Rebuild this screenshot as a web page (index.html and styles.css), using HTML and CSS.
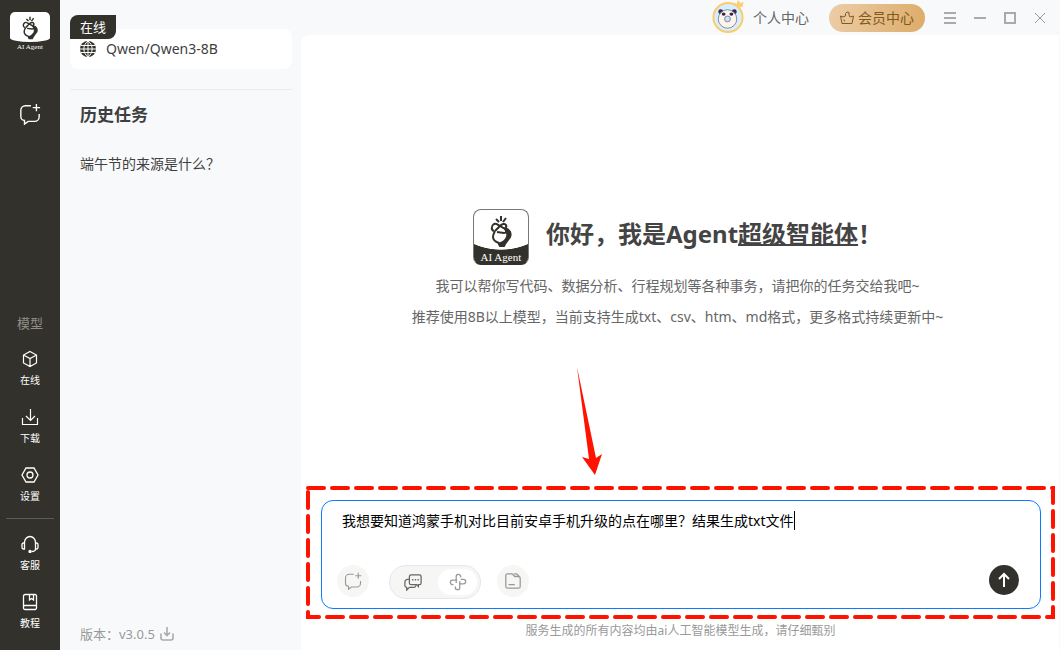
FILE: index.html
```html
<!DOCTYPE html>
<html lang="zh-CN">
<head>
    <meta charset="UTF-8">
    <meta name="viewport" content="width=device-width, initial-scale=1.0">
    <title>AI Agent</title>
    <link rel="stylesheet" href="styles.css">
</head>
<body>
    <!-- shared icons -->
    <svg class="sprite" aria-hidden="true">
        <symbol id="hand" viewBox="-1 -1 22 33">
            <path class="ink" d="M15 13c4 1 5 4 4 8l-5 7-1 2h-4l-1-2 4-2c4-3 5-6 4-9z"/>
            <path d="M9 30l-1-3c-3-1-6-3-6-6s1-4 2-6M15 13c4 1 5 4 4 8"/>
            <path d="M3 15c-3-1-3-5 0-7 2-1 4 1 6 2l5 3c2 2 1 4-1 4l-7-1"/>
            <path d="M4 15l5-5c2-2 5-3 6-1s0 3-2 4"/>
            <path d="M5 3l3 3M10 0v5M15 2l-3 4"/>
        </symbol>
        <symbol id="newchat" viewBox="0 0 24 24">
            <path stroke-width="1.500" d="M13 3H7a5 5 0 0 0-5 5v7a4 4 0 0 0 4 4v4l4-3h7a5 5 0 0 0 5-5v-3M19 1v8M15 5h8"/>
        </symbol>
    </svg>

    <div class="app">
        <nav class="rail">
            <div class="rail-logo">
                <div class="rail-logo-face"><svg class="hand"><use href="#hand"/></svg></div>
                <span>AI Agent</span>
            </div>
            <button class="rail-new" aria-label="新建对话"><svg><use href="#newchat"/></svg></button>
            <p class="rail-title">模型</p>
            <button class="rail-btn">
                <svg viewBox="0 0 18 18"><path stroke-width="1.200" d="M9 1.500l6.500 3.500v8L9 16.500 2.500 13V5zM2.500 5L9 8.500 15.500 5M9 8.500v8"/></svg>
                在线
            </button>
            <button class="rail-btn">
                <svg viewBox="0 0 18 18"><path stroke-width="1.200" d="M9.500 1v11M5 8l4.500 4.500L14 8M1.500 10v6.500h15V10"/></svg>
                下载
            </button>
            <button class="rail-btn">
                <svg viewBox="0 0 18 18" stroke-width="1.300"><path d="M5 2h8l4 7-4 7H5L1 9z"/><circle cx="9" cy="9" r="3"/></svg>
                设置
            </button>
            <hr>
            <button class="rail-btn">
                <svg viewBox="0 0 18 18" stroke-width="1.300"><path d="M3.500 8V7.500a5.500 6 0 0 1 11 0V8M3.500 8v6H2.500a1.500 1.500 0 0 1-1.500-1.500v-3A1.500 1.500 0 0 1 2.500 8zM14.500 8v6h1a1.500 1.500 0 0 0 1.500-1.500v-3A1.500 1.500 0 0 0 15.500 8zM14.500 14c0 1.500-2 2.500-4 2.500"/><circle class="dot" cx="9" cy="16.500" r="1"/></svg>
                客服
            </button>
            <button class="rail-btn">
                <svg viewBox="0 0 18 18" stroke-width="1.300"><path d="M4 1.500h10a1.500 1.500 0 0 1 1.500 1.500v12a1.500 1.500 0 0 1-1.500 1.500H4A1.500 1.500 0 0 1 2.500 15V3A1.500 1.500 0 0 1 4 1.500zM2.500 12.500h13M8.500 1.500V7L10.500 5.500l2 1.500V1.500"/></svg>
                教程
            </button>
        </nav>

        <aside class="side">
            <div class="model">
                <span class="model-tag">在线</span>
                <svg class="globe" viewBox="0 0 16 16"><circle class="globe-bg" cx="8" cy="8" r="8"/><path d="M8 0v16M0 8h16M1 4.500h14M1 11.500h14M8 0C2.500 4 2.500 12 8 16M8 0c5.500 4 5.500 12 0 16"/></svg>
                <span>Qwen/Qwen3-8B</span>
            </div>
            <h2>历史任务</h2>
            <a class="history" href="#">端午节的来源是什么？</a>
            <div class="version">
                <span>版本：v3.0.5</span>
                <svg viewBox="0 0 14 14"><path stroke-width="1.600" d="M7 0v8M4 5.500l3 3 3-3M1 6.500V11a2 2 0 0 0 2 2h8a2 2 0 0 0 2-2V6.500"/></svg>
            </div>
        </aside>

        <div class="content">
            <header class="topbar">
                <a class="user" href="#">
                    <svg class="avatar" viewBox="0 0 34 36">
                        <circle cx="17" cy="18" r="15" fill="#d5effc" stroke="#fccc68" stroke-width="2"/>
                        <path d="M22 2l4 2 1-4 3 3 3-1-1 5-5 1z" fill="#fccf72"/>
                        <circle cx="9.500" cy="12" r="2.500" fill="#352655"/><circle cx="23.500" cy="12" r="2.500" fill="#352655"/>
                        <ellipse cx="16.500" cy="19.500" rx="9.500" ry="9.500" fill="#fdf5e8" stroke="#62528a" stroke-width=".7"/>
                        <ellipse cx="12.500" cy="14.500" rx="2" ry="1.700" fill="#352655"/><ellipse cx="20.500" cy="14.500" rx="2" ry="1.700" fill="#352655"/>
                        <circle cx="16.500" cy="19.500" r="3" fill="#c3e4f8" stroke="#62528a" stroke-width=".7"/>
                    </svg>
                    <span>个人中心</span>
                </a>
                <button class="vip">
                    <svg viewBox="0 0 16 16"><path d="M4 7L1.500 6l1.500 7.500h10L14.500 6 11 7 10 5V2.500L8 2 6.500 3.500V6zM5 9.500l.5 2"/></svg>
                    会员中心
                </button>
                <div class="win">
                    <button aria-label="菜单"><svg viewBox="0 0 14 14"><path d="M1 2h12M1 7h12M1 12h12"/></svg></button>
                    <button aria-label="最小化"><svg viewBox="0 0 14 14"><path d="M1 7h12"/></svg></button>
                    <button aria-label="最大化"><svg viewBox="0 0 14 14"><path d="M2 2h10v10H2z"/></svg></button>
                    <button aria-label="关闭"><svg viewBox="0 0 14 14"><path d="M2 2l10 10M12 2L2 12"/></svg></button>
                </div>
            </header>

            <main class="panel">
                <section class="hello">
                    <div class="hello-head">
                        <div class="logo"><svg class="hand"><use href="#hand"/></svg><span>AI Agent</span></div>
                        <h1>你好，我是Agent<u>超级智能体</u>！</h1>
                    </div>
                    <p>我可以帮你写代码、数据分析、行程规划等各种事务，请把你的任务交给我吧~</p>
                    <p>推荐使用8B以上模型，当前支持生成txt、csv、htm、md格式，更多格式持续更新中~</p>
                </section>

                <svg class="pointer" viewBox="0 0 25 108"><path d="M0 0l19 91 6-4-7 21L5 90l7 2z"/></svg>

                <div class="highlight">
                    <svg class="dashes" aria-hidden="true"><rect x="2" y="2"/></svg>
                    <form class="ask">
                        <div class="field">
                            <textarea id="question" aria-label="输入任务" rows="2" autofocus>我想要知道鸿蒙手机对比目前安卓手机升级的点在哪里？结果生成txt文件</textarea>
                            <i class="caret" id="caret"></i>
                        </div>
                        <div class="tools">
                            <button type="button" class="round" aria-label="新建对话"><svg><use href="#newchat"/></svg></button>
                            <div class="switch">
                                <button type="button" aria-label="对话模式"><svg class="dark" viewBox="0 0 20 20"><path stroke-width="1.400" d="M8 2h9a2 2 0 0 1 2 2v7a2 2 0 0 1-2 2h-1v2l-2-2H8a2 2 0 0 1-2-2V4a2 2 0 0 1 2-2zM6 7H4a3 3 0 0 0-3 3v4a2 2 0 0 0 2 2v3l3-3h5a2 2 0 0 0 2-2M9 7.500h1.500M12 7.500h1.500M15 7.500h1.500"/></svg></button>
                                <button type="button" class="on" aria-label="智能体模式"><svg viewBox="0 0 20 20"><path stroke-width="1.400" d="M8 11V4a2.500 2.500 0 0 1 5 0v1M9 8H4a2.500 2.500 0 0 0 0 5h1M12 9v7a2.500 2.500 0 0 1-5 0v-1M11 12h5a2.500 2.500 0 0 0 0-5h-3"/></svg></button>
                            </div>
                            <button type="button" class="round" aria-label="文件夹"><svg viewBox="0 0 20 20"><path stroke-width="1.400" d="M4 2h5l3 3h4a2 2 0 0 1 2 2v9a2 2 0 0 1-2 2H4a2 2 0 0 1-2-2V4a2 2 0 0 1 2-2zM11 2h3l3 3M5 14h7"/></svg></button>
                            <button class="send" aria-label="发送"><svg viewBox="0 0 16 16"><path d="M8 15V2M3 7l5-5 5 5"/></svg></button>
                        </div>
                    </form>
                </div>
                <p class="note">服务生成的所有内容均由ai人工智能模型生成，请仔细甄别</p>
            </main>
        </div>
    </div>

    <script>
        const question = document.getElementById('question');
        const caret = document.getElementById('caret');
        const ctx = document.createElement('canvas').getContext('2d');

        // keep the caret after the last character
        function moveCaret() {
            const style = getComputedStyle(question);
            ctx.font = style.fontSize + ' ' + style.fontFamily;
            caret.style.left = parseInt(style.paddingLeft) + Math.round(ctx.measureText(question.value).width) + 'px';
        }

        question.focus();
        question.addEventListener('input', moveCaret);
        moveCaret();
    </script>
</body>
</html>
```
FILE: styles.css
```css
* {
    box-sizing: border-box;
}

body {
    margin: 0;
    font-family: "Noto Sans", "Noto Sans CJK SC", sans-serif;
    font-size: 14px;
    line-height: 20px;
    color: #3f3f3f;
    background: #f8f9fb;
}

h1, h2, p {
    margin: 0;
}

button {
    display: flex;
    align-items: center;
    justify-content: center;
    padding: 0;
    border: 0;
    background: none;
    font: inherit;
    color: inherit;
}

a {
    color: inherit;
    text-decoration: none;
}

svg {
    display: block;
    fill: none;
    stroke: currentColor;
}

.sprite {
    position: absolute;
    width: 0;
    height: 0;
}

.app {
    display: flex;
    height: 100vh;
}

/* left rail */
.rail {
    display: flex;
    flex-direction: column;
    align-items: center;
    width: 60px;
    padding: 12px 6px 20px;
    background: #33312b;
    color: #fff;
}

.rail-logo {
    width: 40px;
    font: 7px/10px "Liberation Serif", serif;
    text-align: center;
    white-space: nowrap;
}

.rail-logo-face {
    display: flex;
    justify-content: center;
    height: 30px;
    padding-top: 4px;
    border-radius: 5px 5px 50% 50% / 5px 5px 4px 4px;
    background: #fff;
}

.hand {
    width: 16px;
    height: 24px;
    color: #33312b;
    stroke-width: 2;
}

.ink {
    fill: #33312b;
}

.rail-new {
    margin-top: 51px;
}

.rail-new svg {
    width: 22px;
    height: 22px;
}

.rail-title {
    margin-top: auto;
    margin-bottom: 17px;
    font-size: 13px;
    color: #8f8e8a;
}

.rail-btn {
    flex-direction: column;
    gap: 5px;
    width: 48px;
    margin-bottom: 21px;
    font-size: 10px;
    line-height: 14px;
}

.rail-btn:last-child {
    margin-bottom: 0;
}

.rail-btn svg {
    width: 18px;
    height: 18px;
}

.rail-btn .dot {
    fill: currentColor;
}

.rail hr {
    width: 48px;
    margin: -6px 0 16px;
    border: 0;
    border-top: 1px solid #5d5b56;
}

/* model and history */
.side {
    display: flex;
    flex-direction: column;
    width: 241px;
    padding: 29px 9px 6px 10px;
}

.model {
    position: relative;
    display: flex;
    align-items: center;
    gap: 10px;
    height: 40px;
    padding: 0 10px;
    border-radius: 8px;
    background: #fff;
}

.model-tag {
    position: absolute;
    top: -14px;
    left: 0;
    padding: 2px 10px;
    border-radius: 8px 0 8px 0;
    background: #33312b;
    font-size: 13px;
    color: #fff;
}

.globe {
    width: 16px;
    height: 16px;
    stroke: #fff;
}

.globe-bg {
    fill: #33312b;
    stroke: none;
}

.side h2 {
    margin-top: 20px;
    padding: 15px 10px;
    border-top: 1px solid #ececee;
    font-size: 17px;
}

.history {
    padding: 14px 10px;
}

.version {
    display: flex;
    align-items: center;
    gap: 5px;
    margin-top: auto;
    padding: 0 10px;
    font-size: 13px;
    color: #999;
}

.version svg {
    width: 14px;
    height: 14px;
    color: #aaa;
}

/* right part */
.content {
    display: flex;
    flex: 1;
    flex-direction: column;
}

.topbar {
    display: flex;
    align-items: center;
    justify-content: flex-end;
    height: 35px;
    padding-right: 13px;
    color: #666;
}

.user {
    display: flex;
    align-items: center;
    gap: 8px;
    margin-right: 20px;
}

.avatar {
    width: 34px;
    height: 35px;
    stroke: none;
}

.vip {
    gap: 3px;
    height: 28px;
    margin-right: 18px;
    padding: 0 11px 0 10px;
    border-radius: 14px;
    background: linear-gradient(100deg, #eccda8, #ddac69);
    color: #835819;
}

.vip svg {
    width: 16px;
    height: 16px;
}

.win {
    display: flex;
    gap: 16px;
    color: #aaa;
}

.win svg {
    width: 14px;
    height: 14px;
    stroke-width: 2;
}

.win button:last-child svg {
    color: #999;
    stroke-width: 1;
}

.panel {
    display: flex;
    flex: 1;
    flex-direction: column;
    margin-right: 1px;
    padding: 0 4px 10px 5px;
    border-radius: 8px 0 0 0;
    background: #fff;
}

.hello {
    margin-top: 174px;
    padding-right: 6px;
    text-align: center;
    color: #666;
}

.hello-head {
    display: flex;
    align-items: center;
    justify-content: center;
    gap: 17px;
    margin-bottom: 11px;
}

.hello h1 {
    padding-bottom: 6px;
    font-size: 24px;
    line-height: 34px;
    color: #444;
}

.hello u {
    text-decoration-thickness: 2px;
    text-decoration-skip-ink: none;
}

.hello p + p {
    margin-top: 11px;
}

.logo {
    display: flex;
    flex-direction: column;
    align-items: center;
    justify-content: space-between;
    width: 56px;
    height: 56px;
    padding-top: 5px;
    border: 1px solid #777;
    border-bottom-color: #33312b;
    border-radius: 8px;
    background: radial-gradient(circle 68px at 50% -28px, #fff 99%, #33312b);
    font: 11px/14px "Liberation Serif", serif;
    color: #fff;
}

.logo .hand {
    width: 22px;
    height: 33px;
}

.pointer {
    width: 25px;
    height: 108px;
    margin: auto 0 11px 271px;
    fill: #ff1200;
    stroke: none;
}

.highlight {
    position: relative;
    padding: 14px 14px 10px 15px;
}

/* red dashed frame round the input */
.dashes {
    position: absolute;
    top: 0;
    left: 0;
    width: 100%;
    height: 100%;
    pointer-events: none;
}

.dashes rect {
    width: calc(100% - 4px);
    height: calc(100% - 4px);
    stroke: #ff1200;
    stroke-width: 4;
    stroke-dasharray: 16 8;
    stroke-linecap: round;
}

.ask {
    padding: 10px 21px 9px 15px;
    border: 1px solid #0a7cff;
    border-radius: 12px;
}

.field {
    position: relative;
}

.field textarea {
    display: block;
    width: 100%;
    height: 54px;
    padding: 0 5px;
    border: 0;
    outline: 0;
    resize: none;
    background: none;
    font: inherit;
    color: #000;
    caret-color: transparent;
}

.caret {
    position: absolute;
    top: 0;
    width: 1px;
    height: 19px;
    background: #000;
}

.tools {
    display: flex;
    align-items: flex-start;
    gap: 16px;
    color: #999;
}

.round {
    width: 32px;
    height: 32px;
    border-radius: 50%;
    background: #f6f6f5;
}

.tools svg {
    width: 18px;
    height: 18px;
}

.switch {
    display: flex;
    gap: 6px;
    margin-left: 4px;
    padding: 3px;
    border: 1px solid #e6e5ef;
    border-radius: 17px;
    background: #f6f6f5;
}

.switch button {
    width: 39px;
    height: 26px;
    border-radius: 13px;
}

.switch .on {
    background: #fff;
}

.switch .dark {
    color: #666;
}

.send {
    width: 30px;
    height: 30px;
    margin-left: auto;
    border-radius: 50%;
    background: #33312b;
    color: #fff;
}

.send svg {
    width: 16px;
    height: 16px;
    stroke-width: 2;
}

.note {
    margin-top: 3px;
    font-size: 12px;
    line-height: 18px;
    text-align: center;
    color: #999;
}
```
